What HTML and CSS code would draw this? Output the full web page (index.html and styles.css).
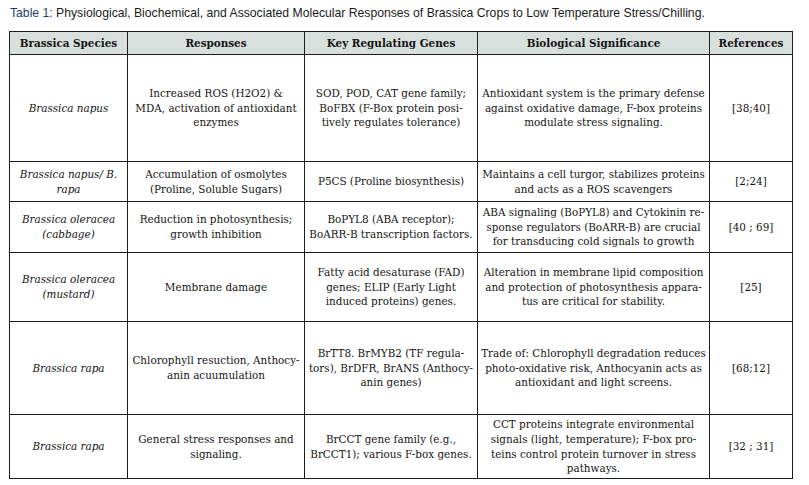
FILE: index.html
```html
<!DOCTYPE html>
<html lang="en">
<head>
    <meta charset="UTF-8">
    <title>Table 1 - Brassica Crops Low Temperature Stress</title>
    <link rel="stylesheet" href="styles.css">
</head>
<body>
    <p class="caption"><span class="caption-label">Table 1:</span> Physiological, Biochemical, and Associated Molecular Responses of Brassica Crops to Low Temperature Stress/Chilling.</p>

    <table class="data-table">
        <colgroup>
            <col class="col-species">
            <col class="col-responses">
            <col class="col-genes">
            <col class="col-significance">
            <col class="col-refs">
        </colgroup>
        <thead>
            <tr>
                <th>Brassica Species</th>
                <th>Responses</th>
                <th>Key Regulating Genes</th>
                <th>Biological Significance</th>
                <th>References</th>
            </tr>
        </thead>
        <tbody>
            <tr class="row-1">
                <td class="species">Brassica napus</td>
                <td>Increased ROS (H2O2) &amp;<br>MDA, activation of antioxidant<br>enzymes</td>
                <td>SOD, POD, CAT gene family;<br>BoFBX (F-Box protein posi-<br>tively regulates tolerance)</td>
                <td>Antioxidant system is the primary defense<br>against oxidative damage, F-box proteins<br>modulate stress signaling.</td>
                <td>[38;40]</td>
            </tr>
            <tr class="row-2">
                <td class="species">Brassica napus/ B.<br>rapa</td>
                <td>Accumulation of osmolytes<br>(Proline, Soluble Sugars)</td>
                <td>P5CS (Proline biosynthesis)</td>
                <td>Maintains a cell turgor, stabilizes proteins<br>and acts as a ROS scavengers</td>
                <td>[2;24]</td>
            </tr>
            <tr class="row-3">
                <td class="species">Brassica oleracea<br>(cabbage)</td>
                <td>Reduction in photosynthesis;<br>growth inhibition</td>
                <td>BoPYL8 (ABA receptor);<br>BoARR-B transcription factors.</td>
                <td>ABA signaling (BoPYL8) and Cytokinin re-<br>sponse regulators (BoARR-B) are crucial<br>for transducing cold signals to growth</td>
                <td>[40 ; 69]</td>
            </tr>
            <tr class="row-4">
                <td class="species">Brassica oleracea<br>(mustard)</td>
                <td>Membrane damage</td>
                <td>Fatty acid desaturase (FAD)<br>genes; ELIP (Early Light<br>induced proteins) genes.</td>
                <td>Alteration in membrane lipid composition<br>and protection of photosynthesis appara-<br>tus are critical for stability.</td>
                <td>[25]</td>
            </tr>
            <tr class="row-5">
                <td class="species">Brassica rapa</td>
                <td>Chlorophyll resuction, Anthocy-<br>anin acuumulation</td>
                <td>BrTT8. BrMYB2 (TF regula-<br>tors), BrDFR, BrANS (Anthocy-<br>anin genes)</td>
                <td>Trade of: Chlorophyll degradation reduces<br>photo-oxidative risk, Anthocyanin acts as<br>antioxidant and light screens.</td>
                <td>[68;12]</td>
            </tr>
            <tr class="row-6">
                <td class="species">Brassica rapa</td>
                <td>General stress responses and<br>signaling.</td>
                <td>BrCCT gene family (e.g.,<br>BrCCT1); various F-box genes.</td>
                <td>CCT proteins integrate environmental<br>signals (light, temperature); F-box pro-<br>teins control protein turnover in stress<br>pathways.</td>
                <td>[32 ; 31]</td>
            </tr>
        </tbody>
    </table>
</body>
</html>
```

FILE: styles.css
```css
body {
    margin: 0;
    padding: 0 9px;
    background-color: #ffffff;
    color: #1a1a1a;
}

.caption {
    font-family: "Liberation Sans", Arial, sans-serif;
    font-size: 12.2px;
    color: #1a1a1a;
    margin: 6px 0 0 1px;
    line-height: 15px;
}
.caption-label {
    color: #1d3b6f;
}

.data-table {
    margin-top: 10px;
    width: 783px;
    border-collapse: collapse;
    table-layout: fixed;
    font-family: "DejaVu Serif", "Liberation Serif", serif;
    font-size: 10.4px;
    line-height: 14.7px;
    color: #141414;
}

.col-species { width: 118px; }
.col-responses { width: 177px; }
.col-genes { width: 173px; }
.col-significance { width: 232px; }
.col-refs { width: 83px; }

.data-table th,
.data-table td {
    border: 1px solid #1c1c1c;
    text-align: center;
    vertical-align: middle;
    padding: 0 2px;
    white-space: nowrap;
}

.data-table th {
    background-color: #d9dfdd;
    font-weight: bold;
    height: 22px;
}

.species {
    font-style: italic;
}

.row-1 td { height: 106px; }
.row-2 td { height: 39px; }
.row-3 td { height: 50px; }
.row-4 td { height: 68px; }
.row-5 td { height: 92px; }
.row-6 td { height: 63px; }
```
